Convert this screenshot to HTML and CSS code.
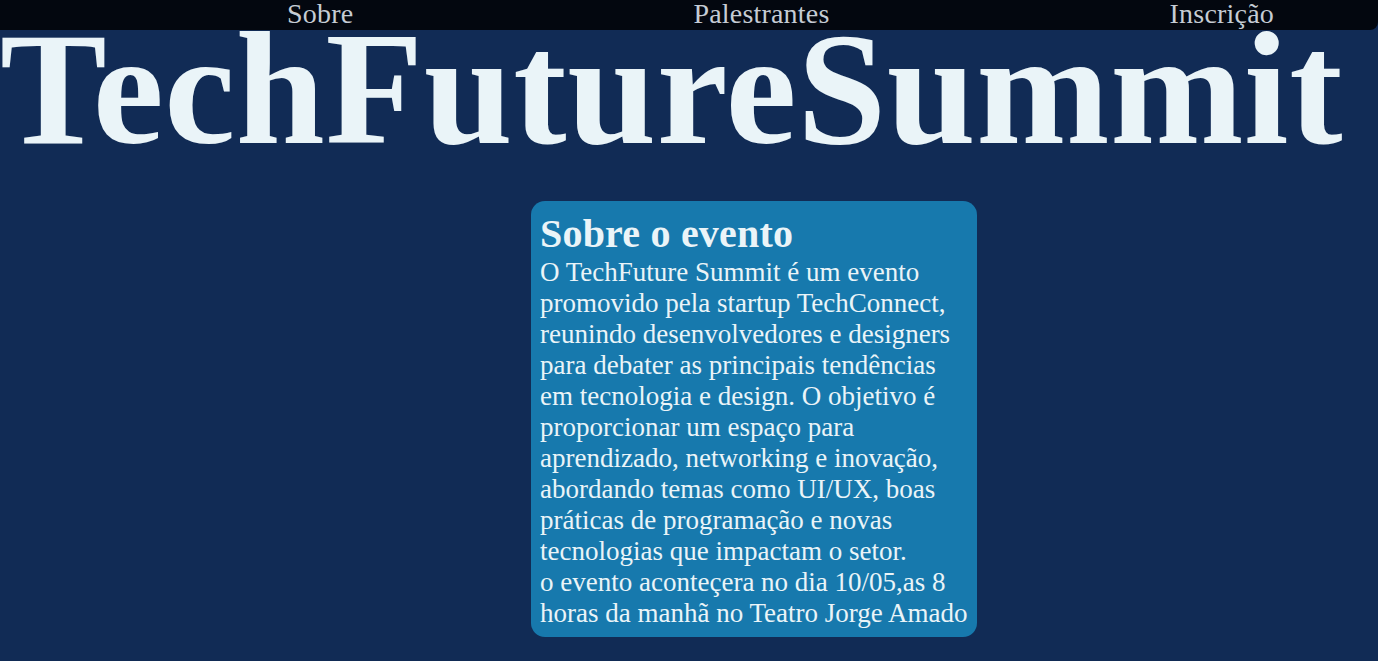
FILE: index.html
```html
<!DOCTYPE html>
<html lang="pt-BR">
<head>
<meta charset="utf-8">
<title>TechFuture Summit</title>
<link rel="stylesheet" href="styles.css">
</head>
<body>
<header class="topbar">
  <nav class="menu">
    <a class="menu-link" href="#sobre">Sobre</a>
    <a class="menu-link" href="#palestrantes">Palestrantes</a>
    <a class="menu-link" href="#inscricao">Inscrição</a>
  </nav>
</header>
<h1 class="title">TechFutureSummit</h1>
<main class="content">
  <section class="card" id="sobre">
    <h2 class="card-title">Sobre o evento</h2>
    <p class="card-text">O TechFuture Summit é um evento promovido pela startup TechConnect, reunindo desenvolvedores e designers para debater as principais tendências em tecnologia e design. O objetivo é proporcionar um espaço para aprendizado, networking e inovação, abordando temas como UI/UX, boas práticas de programação e novas tecnologias que impactam o setor.</p>
    <p class="card-text">o evento aconteçera no dia 10/05,as 8 horas da manhã no Teatro Jorge Amado</p>
  </section>
</main>
</body>
</html>
```

FILE: styles.css
```css
html, body {
  margin: 0;
  padding: 0;
}

body {
  background: #112b55;
  font-family: "Liberation Serif", "Times New Roman", serif;
  color: #eaf4f8;
  min-height: 661px;
}

.topbar {
  background: #03070f;
  height: 30px;
  border-bottom-right-radius: 8px;
}

.menu {
  display: flex;
  justify-content: space-between;
  align-items: flex-start;
  padding: 0 104px 0 287px;
  height: 30px;
}

.menu-link {
  color: #c5ccd4;
  text-decoration: none;
  font-size: 28px;
  line-height: 28px;
  letter-spacing: 0.2px;
}

.title {
  margin: 0;
  font-size: 160px;
  font-weight: bold;
  line-height: 118px;
  letter-spacing: 0.6px;
  color: #eaf4f8;
  white-space: nowrap;
}

.content {
  display: flex;
  padding: 53px 0 0 531px;
}

.card {
  width: 428px;
  background: #1779ad;
  border-radius: 14px;
  padding: 9px 9px 8px 9px;
}

.card-title {
  margin: 0;
  font-size: 40px;
  font-weight: bold;
  letter-spacing: 0.2px;
}

.card-text {
  margin: 0;
  font-size: 27px;
}
```
